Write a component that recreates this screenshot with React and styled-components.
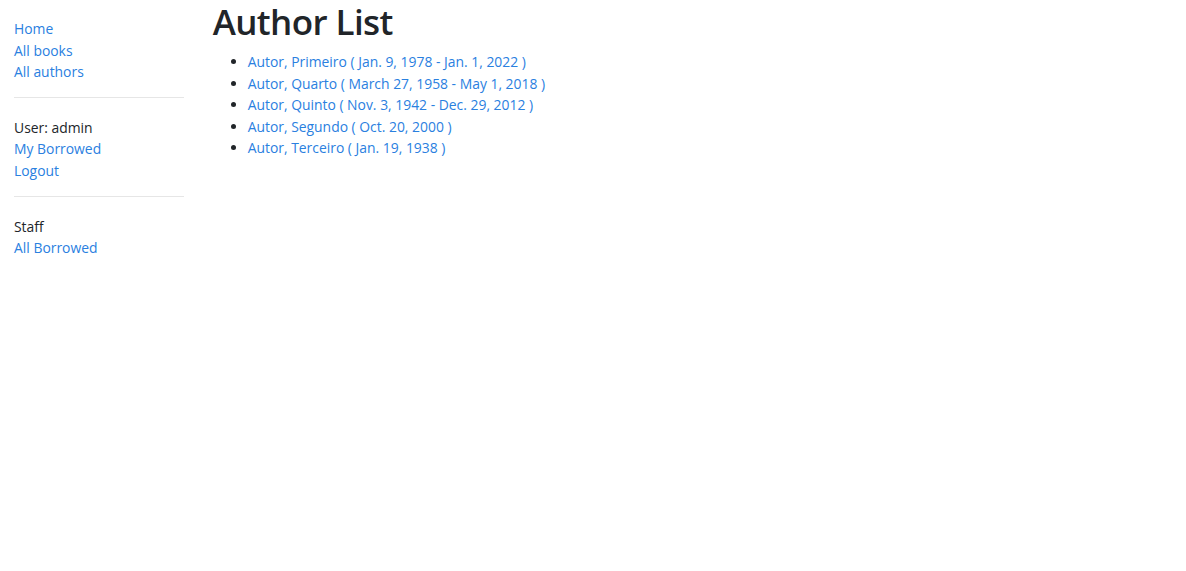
import styled, { createGlobalStyle } from "styled-components";

const GlobalStyle = createGlobalStyle`
  html, body {
    margin: 0;
    padding: 0;
    background: #fff;
  }
  body {
    font-family: "Open Sans", "Noto Sans", sans-serif;
    font-size: 13.9px;
    line-height: 21.6px;
    color: #212529;
  }
`;

const Page = styled.div`
  display: flex;
  width: 100%;
`;

const Sidebar = styled.nav`
  flex: 0 0 16.6667%;
  box-sizing: border-box;
  padding: 18px 14px 0 14px;
`;

const Main = styled.main`
  flex: 1;
  box-sizing: border-box;
  padding: 0 15px;
`;

const NavList = styled.ul`
  list-style: none;
  margin: 0;
  padding: 0;
`;

const NavItem = styled.li`
  margin: 0;
`;

const NavLink = styled.a`
  color: #2a80df;
  text-decoration: none;
`;

const Divider = styled.hr`
  border: 0;
  border-top: 1px solid #e6e6e6;
  margin: 14px 0 19px 0;
`;

const Title = styled.h1`
  font-size: 35px;
  font-weight: 600;
  line-height: 44px;
  margin: 0 0 7px 0;
  color: #212529;
  letter-spacing: -0.6px;
`;

const AuthorList = styled.ul`
  margin: 0;
  padding-left: 35px;
`;

const AuthorItem = styled.li`
  &::marker {
    color: #212529;
  }
`;

const authors = [
  "Autor, Primeiro ( Jan. 9, 1978 - Jan. 1, 2022 )",
  "Autor, Quarto ( March 27, 1958 - May 1, 2018 )",
  "Autor, Quinto ( Nov. 3, 1942 - Dec. 29, 2012 )",
  "Autor, Segundo ( Oct. 20, 2000 )",
  "Autor, Terceiro ( Jan. 19, 1938 )",
];

export default function App() {
  return (
    <>
      <GlobalStyle />
      <Page>
        <Sidebar>
          <NavList>
            <NavItem><NavLink href="#">Home</NavLink></NavItem>
            <NavItem><NavLink href="#">All books</NavLink></NavItem>
            <NavItem><NavLink href="#">All authors</NavLink></NavItem>
          </NavList>
          <Divider />
          <NavList>
            <NavItem>User: admin</NavItem>
            <NavItem><NavLink href="#">My Borrowed</NavLink></NavItem>
            <NavItem><NavLink href="#">Logout</NavLink></NavItem>
          </NavList>
          <Divider />
          <NavList>
            <NavItem>Staff</NavItem>
            <NavItem><NavLink href="#">All Borrowed</NavLink></NavItem>
          </NavList>
        </Sidebar>
        <Main>
          <Title>Author List</Title>
          <AuthorList>
            {authors.map((a) => (
              <AuthorItem key={a}>
                <NavLink href="#">{a}</NavLink>
              </AuthorItem>
            ))}
          </AuthorList>
        </Main>
      </Page>
    </>
  );
}
